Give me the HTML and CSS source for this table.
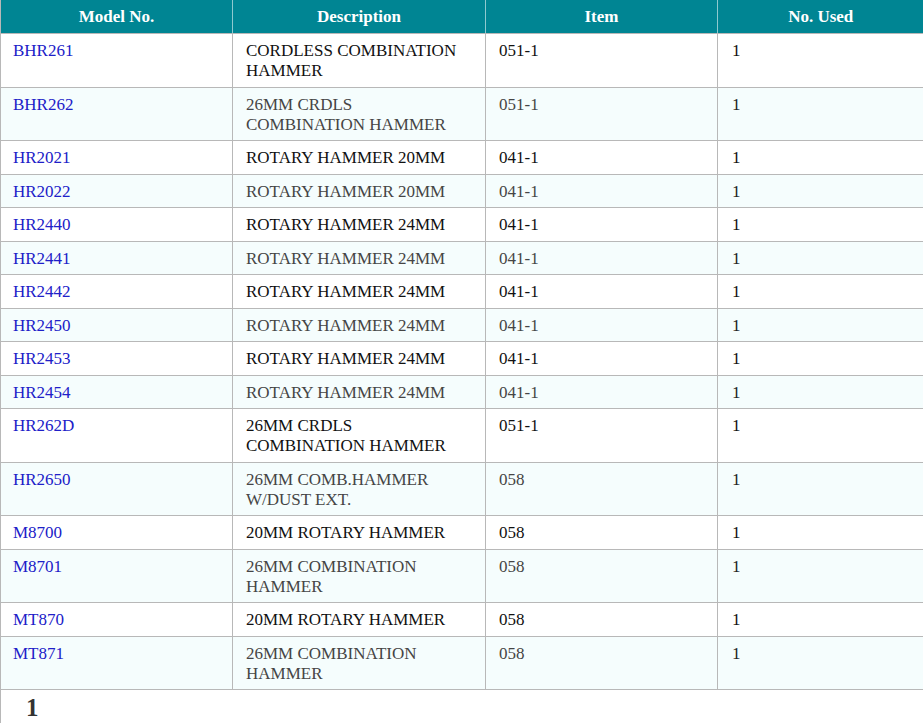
FILE: index.html
```html
<!DOCTYPE html>
<html>
<head>
<meta charset="utf-8">
<link rel="stylesheet" href="styles.css">
</head>
<body>
<table class="grid">
<colgroup><col class="c1"><col class="c2"><col class="c3"><col class="c4"></colgroup>
<thead>
<tr><th>Model No.</th><th>Description</th><th>Item</th><th>No. Used</th></tr>
</thead>
<tbody>
<tr><td><a href="#">BHR261</a></td><td>CORDLESS COMBINATION HAMMER</td><td>051-1</td><td>1</td></tr>
<tr class="alt"><td><a href="#">BHR262</a></td><td>26MM CRDLS<br>COMBINATION HAMMER</td><td>051-1</td><td>1</td></tr>
<tr><td><a href="#">HR2021</a></td><td>ROTARY HAMMER 20MM</td><td>041-1</td><td>1</td></tr>
<tr class="alt"><td><a href="#">HR2022</a></td><td>ROTARY HAMMER 20MM</td><td>041-1</td><td>1</td></tr>
<tr><td><a href="#">HR2440</a></td><td>ROTARY HAMMER 24MM</td><td>041-1</td><td>1</td></tr>
<tr class="alt"><td><a href="#">HR2441</a></td><td>ROTARY HAMMER 24MM</td><td>041-1</td><td>1</td></tr>
<tr><td><a href="#">HR2442</a></td><td>ROTARY HAMMER 24MM</td><td>041-1</td><td>1</td></tr>
<tr class="alt"><td><a href="#">HR2450</a></td><td>ROTARY HAMMER 24MM</td><td>041-1</td><td>1</td></tr>
<tr><td><a href="#">HR2453</a></td><td>ROTARY HAMMER 24MM</td><td>041-1</td><td>1</td></tr>
<tr class="alt"><td><a href="#">HR2454</a></td><td>ROTARY HAMMER 24MM</td><td>041-1</td><td>1</td></tr>
<tr><td><a href="#">HR262D</a></td><td>26MM CRDLS<br>COMBINATION HAMMER</td><td>051-1</td><td>1</td></tr>
<tr class="alt"><td><a href="#">HR2650</a></td><td>26MM COMB.HAMMER<br>W/DUST EXT.</td><td>058</td><td>1</td></tr>
<tr><td><a href="#">M8700</a></td><td>20MM ROTARY HAMMER</td><td>058</td><td>1</td></tr>
<tr class="alt"><td><a href="#">M8701</a></td><td>26MM COMBINATION<br>HAMMER</td><td>058</td><td>1</td></tr>
<tr><td><a href="#">MT870</a></td><td>20MM ROTARY HAMMER</td><td>058</td><td>1</td></tr>
<tr class="alt"><td><a href="#">MT871</a></td><td>26MM COMBINATION<br>HAMMER</td><td>058</td><td>1</td></tr>
</tbody>
<tfoot>
<tr><td colspan="4" class="pager"><span class="page">1</span></td></tr>
</tfoot>
</table>
</body>
</html>
```

FILE: styles.css
```css
html, body {
  margin: 0;
  padding: 0;
  background: #ffffff;
}
body {
  font-family: "Liberation Serif", "Times New Roman", serif;
  font-size: 17px;
  color: #111;
}
.grid {
  width: 923px;
  border-collapse: collapse;
  table-layout: fixed;
}
.c1 { width: 232px; }
.c2 { width: 253px; }
.c3 { width: 232px; }
.c4 { width: 206px; }
.grid th {
  background: #008593;
  color: #ffffff;
  font-weight: bold;
  text-align: center;
  height: 33px;
  padding: 0 12px;
  line-height: 33px;
  border-left: 1px solid #8fc9cf;
  border-bottom: 1px solid #b8b8b8;
}
.grid th:first-child { border-left: 1px solid #b8b8b8; }
.grid td {
  vertical-align: top;
  padding: 7px 12px 5.5px 13px;
  line-height: 20px;
  border: 1px solid #b8b8b8;
  border-top: 0;
  color: #111;
}
.grid td:first-child { padding-left: 12px; }
.grid tr.alt td {
  background: #f5fdfd;
  color: #454545;
}
.grid tr.alt td:nth-child(4) { color: #222; }
.grid td:nth-child(3) { padding-left: 13px; }
.grid td:nth-child(4) { padding-left: 14px; }
.grid a {
  color: #2020c8;
  text-decoration: none;
}
.grid td.pager {
  background: #ffffff;
  border-right: 0;
  border-bottom: 0;
  padding: 4px 25px;
  line-height: 28px;
}
.page {
  font-size: 25px;
  font-weight: bold;
  color: #333;
}
```
